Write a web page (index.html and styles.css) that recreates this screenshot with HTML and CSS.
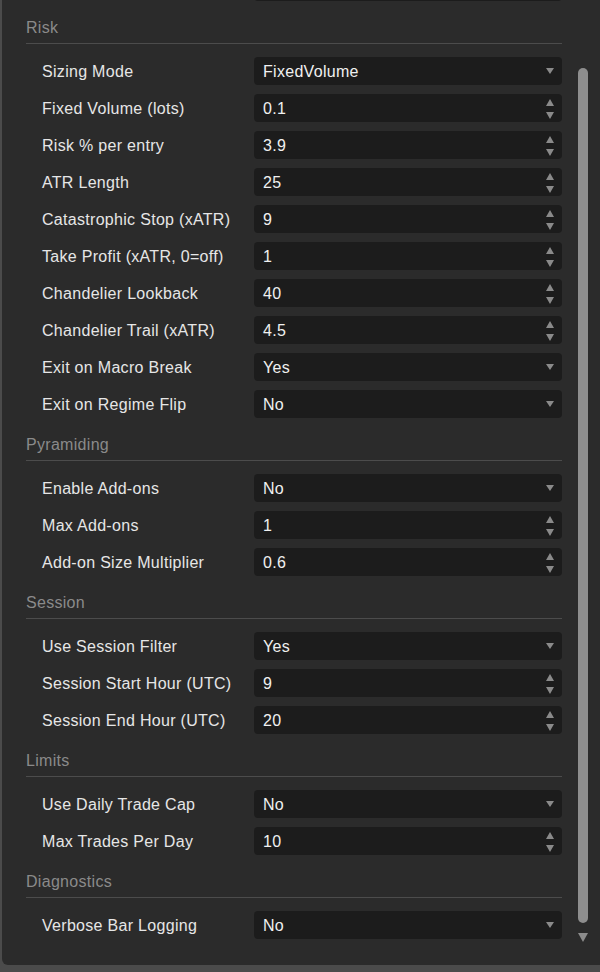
FILE: index.html
```html
<!DOCTYPE html>
<html lang="en">
<head>
    <meta charset="UTF-8">
    <meta name="viewport" content="width=device-width, initial-scale=1.0">
    <title>Parameters</title>
    <link rel="stylesheet" href="styles.css">
</head>
<body>
    <div class="panel">
        <div class="params">
            <!-- tail of the group above, scrolled out of view -->
            <div class="row stub">
                <span class="label"></span>
                <div class="field"></div>
            </div>

            <div class="group-title">Risk</div>
            <div class="rows">
                <div class="row">
                    <span class="label">Sizing Mode</span>
                    <div class="field select"><span>FixedVolume</span><svg class="drop" width="8" height="6" viewBox="0 0 8 6"><path d="M0 0h8L4 6z"/></svg></div>
                </div>
                <div class="row">
                    <span class="label">Fixed Volume (lots)</span>
                    <div class="field spin"><span>0.1</span><svg class="spinner" width="8" height="20" viewBox="0 0 8 20"><path d="M4 0l4 7H0z M0 13h8l-4 7z"/></svg></div>
                </div>
                <div class="row">
                    <span class="label">Risk % per entry</span>
                    <div class="field spin"><span>3.9</span><svg class="spinner" width="8" height="20" viewBox="0 0 8 20"><path d="M4 0l4 7H0z M0 13h8l-4 7z"/></svg></div>
                </div>
                <div class="row">
                    <span class="label">ATR Length</span>
                    <div class="field spin"><span>25</span><svg class="spinner" width="8" height="20" viewBox="0 0 8 20"><path d="M4 0l4 7H0z M0 13h8l-4 7z"/></svg></div>
                </div>
                <div class="row">
                    <span class="label">Catastrophic Stop (xATR)</span>
                    <div class="field spin"><span>9</span><svg class="spinner" width="8" height="20" viewBox="0 0 8 20"><path d="M4 0l4 7H0z M0 13h8l-4 7z"/></svg></div>
                </div>
                <div class="row">
                    <span class="label">Take Profit (xATR, 0=off)</span>
                    <div class="field spin"><span>1</span><svg class="spinner" width="8" height="20" viewBox="0 0 8 20"><path d="M4 0l4 7H0z M0 13h8l-4 7z"/></svg></div>
                </div>
                <div class="row">
                    <span class="label">Chandelier Lookback</span>
                    <div class="field spin"><span>40</span><svg class="spinner" width="8" height="20" viewBox="0 0 8 20"><path d="M4 0l4 7H0z M0 13h8l-4 7z"/></svg></div>
                </div>
                <div class="row">
                    <span class="label">Chandelier Trail (xATR)</span>
                    <div class="field spin"><span>4.5</span><svg class="spinner" width="8" height="20" viewBox="0 0 8 20"><path d="M4 0l4 7H0z M0 13h8l-4 7z"/></svg></div>
                </div>
                <div class="row">
                    <span class="label">Exit on Macro Break</span>
                    <div class="field select"><span>Yes</span><svg class="drop" width="8" height="6" viewBox="0 0 8 6"><path d="M0 0h8L4 6z"/></svg></div>
                </div>
                <div class="row">
                    <span class="label">Exit on Regime Flip</span>
                    <div class="field select"><span>No</span><svg class="drop" width="8" height="6" viewBox="0 0 8 6"><path d="M0 0h8L4 6z"/></svg></div>
                </div>
            </div>

            <div class="group-title">Pyramiding</div>
            <div class="rows">
                <div class="row">
                    <span class="label">Enable Add-ons</span>
                    <div class="field select"><span>No</span><svg class="drop" width="8" height="6" viewBox="0 0 8 6"><path d="M0 0h8L4 6z"/></svg></div>
                </div>
                <div class="row">
                    <span class="label">Max Add-ons</span>
                    <div class="field spin"><span>1</span><svg class="spinner" width="8" height="20" viewBox="0 0 8 20"><path d="M4 0l4 7H0z M0 13h8l-4 7z"/></svg></div>
                </div>
                <div class="row">
                    <span class="label">Add-on Size Multiplier</span>
                    <div class="field spin"><span>0.6</span><svg class="spinner" width="8" height="20" viewBox="0 0 8 20"><path d="M4 0l4 7H0z M0 13h8l-4 7z"/></svg></div>
                </div>
            </div>

            <div class="group-title">Session</div>
            <div class="rows">
                <div class="row">
                    <span class="label">Use Session Filter</span>
                    <div class="field select"><span>Yes</span><svg class="drop" width="8" height="6" viewBox="0 0 8 6"><path d="M0 0h8L4 6z"/></svg></div>
                </div>
                <div class="row">
                    <span class="label">Session Start Hour (UTC)</span>
                    <div class="field spin"><span>9</span><svg class="spinner" width="8" height="20" viewBox="0 0 8 20"><path d="M4 0l4 7H0z M0 13h8l-4 7z"/></svg></div>
                </div>
                <div class="row">
                    <span class="label">Session End Hour (UTC)</span>
                    <div class="field spin"><span>20</span><svg class="spinner" width="8" height="20" viewBox="0 0 8 20"><path d="M4 0l4 7H0z M0 13h8l-4 7z"/></svg></div>
                </div>
            </div>

            <div class="group-title">Limits</div>
            <div class="rows">
                <div class="row">
                    <span class="label">Use Daily Trade Cap</span>
                    <div class="field select"><span>No</span><svg class="drop" width="8" height="6" viewBox="0 0 8 6"><path d="M0 0h8L4 6z"/></svg></div>
                </div>
                <div class="row">
                    <span class="label">Max Trades Per Day</span>
                    <div class="field spin"><span>10</span><svg class="spinner" width="8" height="20" viewBox="0 0 8 20"><path d="M4 0l4 7H0z M0 13h8l-4 7z"/></svg></div>
                </div>
            </div>

            <div class="group-title">Diagnostics</div>
            <div class="rows">
                <div class="row">
                    <span class="label">Verbose Bar Logging</span>
                    <div class="field select"><span>No</span><svg class="drop" width="8" height="6" viewBox="0 0 8 6"><path d="M0 0h8L4 6z"/></svg></div>
                </div>
            </div>
        </div>

        <div class="scrollbar">
            <div class="thumb"></div>
            <svg class="scroll-arrow" width="10" height="9" viewBox="0 0 10 9"><path d="M0 0h10L5 9z"/></svg>
        </div>
    </div>
</body>
</html>
```

FILE: styles.css
```css
body {
    margin: 0;
    background-color: #4b4b4b;
    font-family: "Liberation Sans", Arial, sans-serif;
    font-size: 16px;
    letter-spacing: 0.3px;
}
.panel {
    display: flex;
    margin-left: 2px;
    height: 965px;
    background-color: #2b2b2b;
    border-bottom-left-radius: 6px;
    overflow: hidden;
}
.params {
    width: 536px;
    padding-left: 24px;
}
.group-title {
    padding: 17px 0 5px;
    line-height: 20px;
    color: #8a8a8a;
    border-bottom: 1px solid #4c4c4c;
    margin-bottom: 13px;
}
.rows {
    display: flex;
    flex-direction: column;
    gap: 9px;
}
.row {
    display: flex;
    align-items: center;
    padding-left: 16px;
    height: 28px;
}
.row .label {
    width: 212px;
    padding-top: 2px;
    color: #e6e6e6;
    white-space: nowrap;
}
.stub {
    margin-top: -27px;
}
.field {
    display: flex;
    align-items: center;
    justify-content: space-between;
    width: 308px;
    height: 28px;
    box-sizing: border-box;
    padding: 0 8px 0 9px;
    background-color: #1c1c1c;
    border-radius: 4px;
    color: #f0f0f0;
}
.field span {
    padding-top: 2px;
}
.field svg {
    fill: #8a8a8a;
}
.field .spinner {
    margin-top: 1px;
}
.scrollbar {
    display: flex;
    flex-direction: column;
    align-items: center;
    width: 10px;
    margin-left: 16px;
    padding: 68px 0 23px;
}
.thumb {
    flex: 1;
    width: 10px;
    background-color: #8e8e8e;
    border-radius: 5px;
}
.scroll-arrow {
    margin-top: 10px;
    fill: #8c8c8c;
}
```
